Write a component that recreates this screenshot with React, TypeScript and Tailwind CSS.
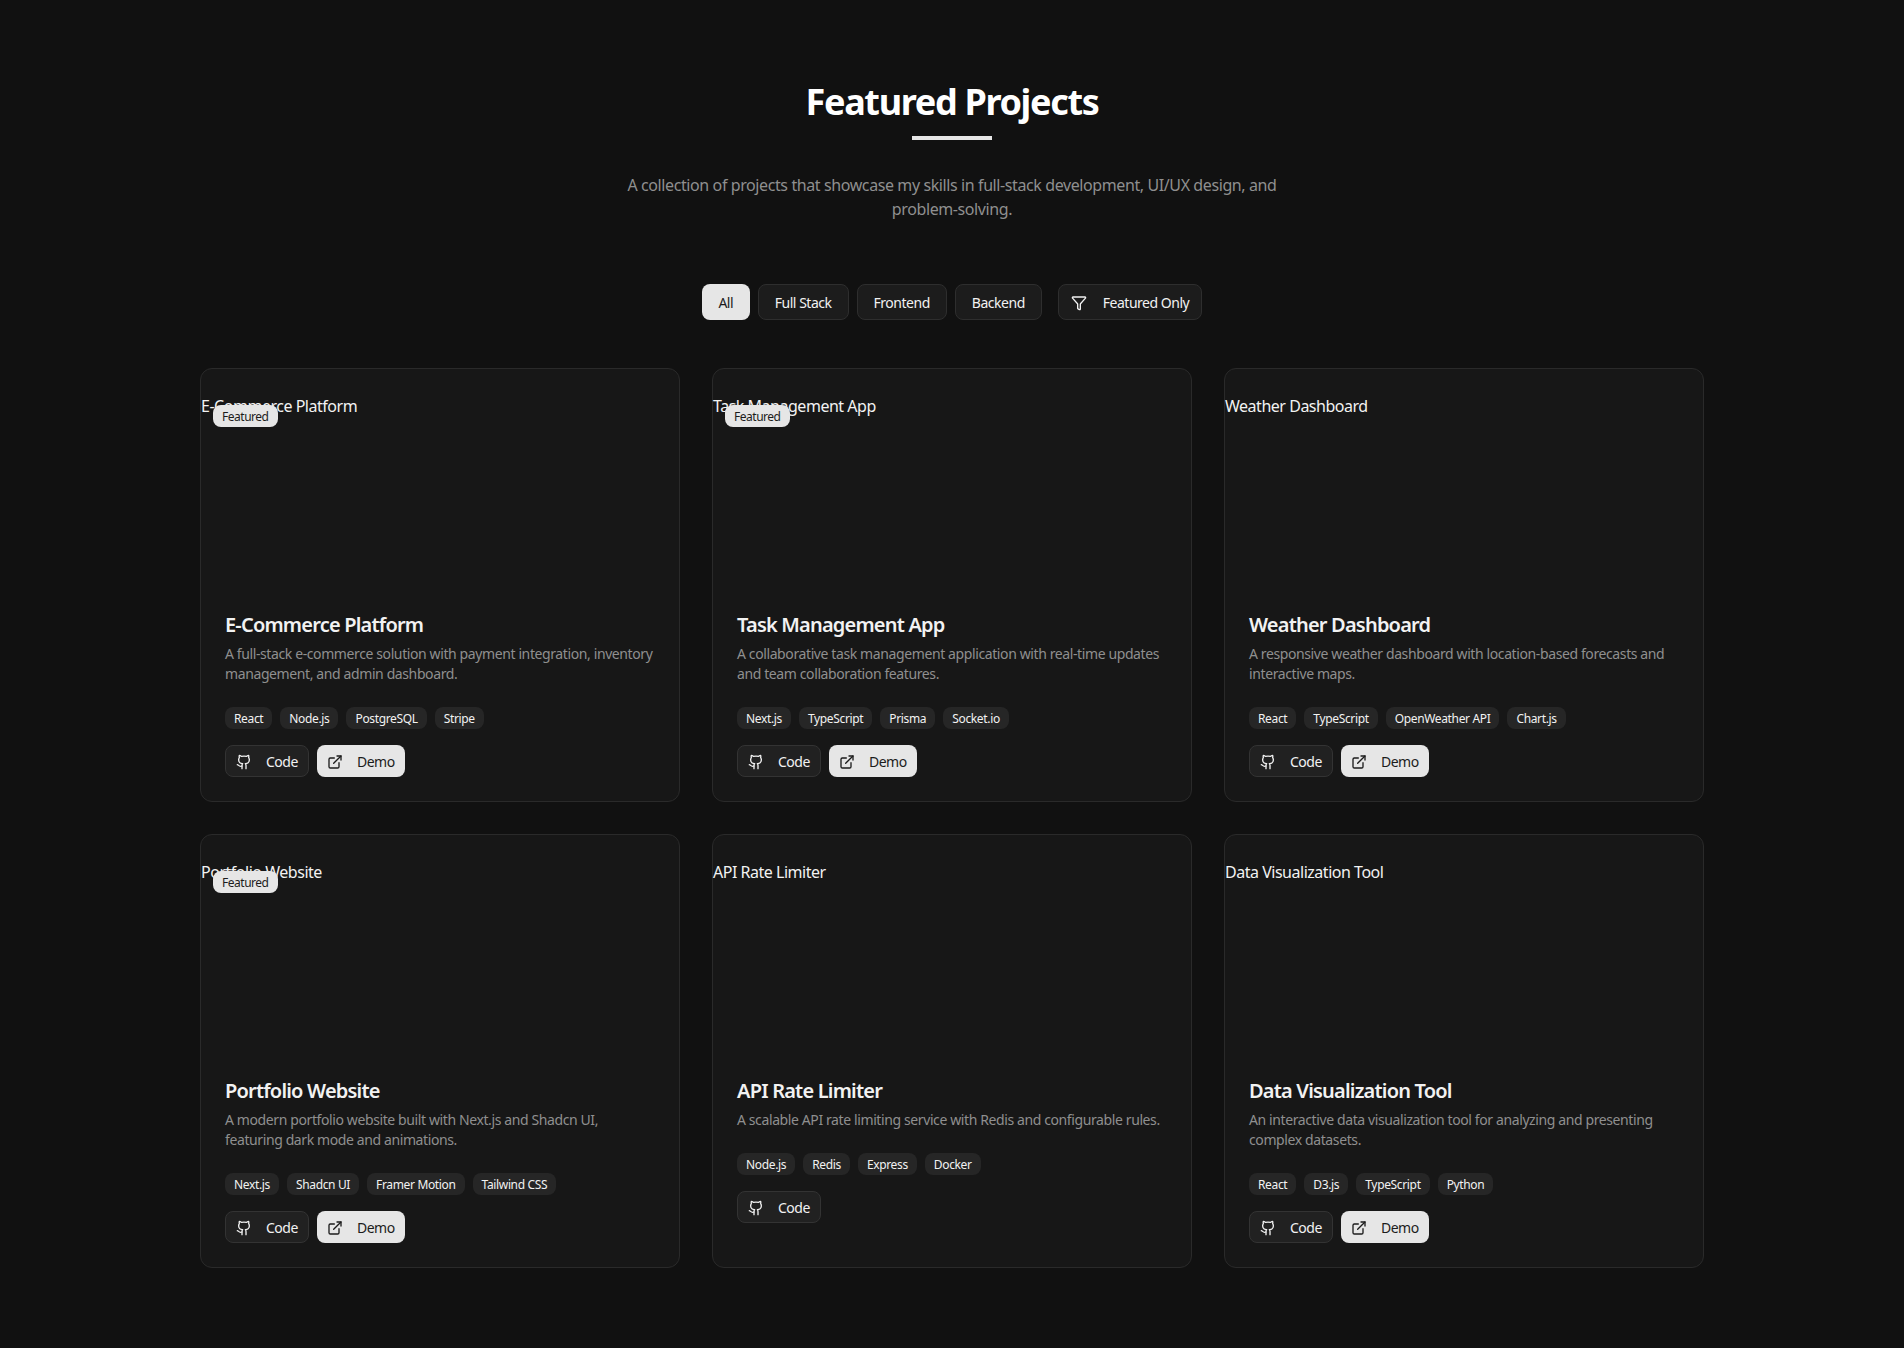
import { Filter, Github, ExternalLink } from "lucide-react";

const projects = [
  { t: "E-Commerce Platform", d: "A full-stack e-commerce solution with payment integration, inventory management, and admin dashboard.", tags: ["React", "Node.js", "PostgreSQL", "Stripe"], f: true, demo: true },
  { t: "Task Management App", d: "A collaborative task management application with real-time updates and team collaboration features.", tags: ["Next.js", "TypeScript", "Prisma", "Socket.io"], f: true, demo: true },
  { t: "Weather Dashboard", d: "A responsive weather dashboard with location-based forecasts and interactive maps.", tags: ["React", "TypeScript", "OpenWeather API", "Chart.js"], f: false, demo: true },
  { t: "Portfolio Website", d: "A modern portfolio website built with Next.js and Shadcn UI, featuring dark mode and animations.", tags: ["Next.js", "Shadcn UI", "Framer Motion", "Tailwind CSS"], f: true, demo: true },
  { t: "API Rate Limiter", d: "A scalable API rate limiting service with Redis and configurable rules.", tags: ["Node.js", "Redis", "Express", "Docker"], f: false, demo: false },
  { t: "Data Visualization Tool", d: "An interactive data visualization tool for analyzing and presenting complex datasets.", tags: ["React", "D3.js", "TypeScript", "Python"], f: false, demo: true },
];

const outlineBtn = "inline-flex items-center justify-center h-9 pt-px rounded-lg border border-[#2e2e2e] bg-[#1c1c1c] text-sm text-[#f2f2f2]";

export default function App() {
  return (
    <div className="min-h-[1348px] bg-[#111111] font-['Noto_Sans',sans-serif] tracking-[-0.03em] text-[#f2f2f2]">
      <div className="mx-auto max-w-[1536px] px-4 pt-[82px] pb-20">
        <div className="flex flex-col items-center text-center">
          <h2 className="text-4xl font-bold tracking-[-0.037em] text-white">Featured Projects</h2>
          <div className="mt-[14px] h-1 w-20 bg-[#e6e6e6]" />
          <p className="mt-[33px] max-w-2xl text-base tracking-[-0.025em] text-[#8f8f8f]">
            A collection of projects that showcase my skills in full-stack development, UI/UX design, and problem-solving.
          </p>
        </div>
        <div className="mt-[63px] flex justify-center gap-4">
          <div className="flex gap-2">
            <button className="inline-flex h-9 w-12 items-center justify-center rounded-lg bg-[#e6e6e6] pt-px text-sm text-[#1c1c1c]">All</button>
            <button className={`${outlineBtn} px-4`}>Full Stack</button>
            <button className={`${outlineBtn} px-4`}>Frontend</button>
            <button className={`${outlineBtn} px-4`}>Backend</button>
          </div>
          <button className={`${outlineBtn} gap-2 px-3`}>
            <Filter className="mr-2 h-4 w-4" />
            Featured Only
          </button>
        </div>
        <div className="mt-12 grid grid-cols-3 gap-8">
          {projects.map((p) => (
            <div key={p.t} className="flex h-[434px] flex-col rounded-xl border border-[#2a2a2a] bg-[#171717] py-6">
              <div className="relative h-48 shrink-0 pt-px">
                <span className="text-base text-[#f2f2f2]">{p.t}</span>
                {p.f && (
                  <span className="absolute left-3 top-3 rounded-lg border border-transparent bg-[#e6e6e6] px-2 pt-[3px] pb-px text-xs text-[#1c1c1c]">Featured</span>
                )}
              </div>
              <div className="mt-[26px] px-6">
                <h3 className="text-xl font-semibold tracking-[-0.04em] text-[#f2f2f2]">{p.t}</h3>
                <p className="mt-[5px] text-sm tracking-[-0.028em] text-[#8f8f8f]">{p.d}</p>
              </div>
              <div className="mt-[23px] flex flex-wrap gap-2 px-6">
                {p.tags.map((x) => (
                  <span key={x} className="rounded-lg border border-transparent bg-[#262626] px-2 pt-[3px] pb-px text-xs tracking-[-0.029em] text-[#f2f2f2]">{x}</span>
                ))}
              </div>
              <div className="mt-4 flex gap-2 px-6">
                <button className="inline-flex h-8 items-center gap-1.5 rounded-lg border border-[#333333] bg-[#212121] px-2.5 pt-px text-sm text-[#f2f2f2]">
                  <Github className="mr-2 h-4 w-4" />
                  Code
                </button>
                {p.demo && (
                  <button className="inline-flex h-8 items-center gap-1.5 rounded-lg bg-[#e6e6e6] px-2.5 pt-px text-sm text-[#1c1c1c]">
                    <ExternalLink className="mr-2 h-4 w-4" />
                    Demo
                  </button>
                )}
              </div>
            </div>
          ))}
        </div>
      </div>
    </div>
  );
}
